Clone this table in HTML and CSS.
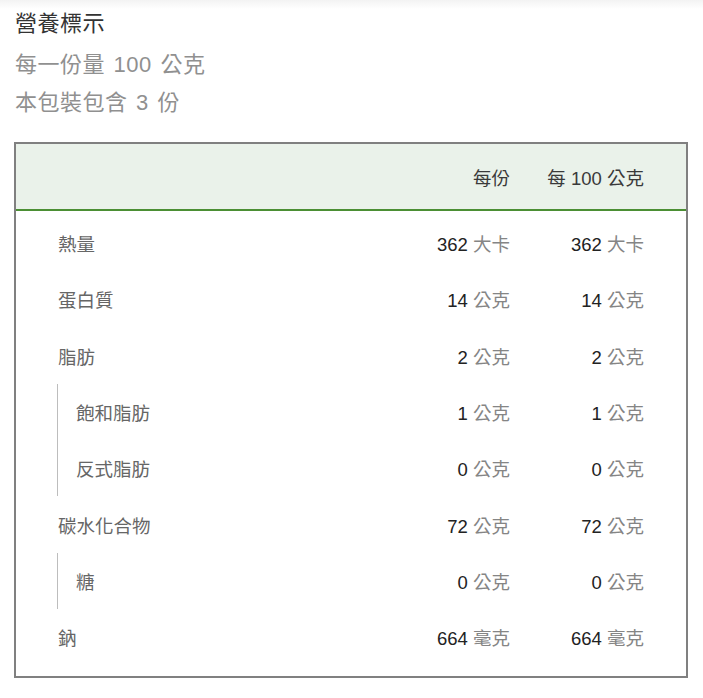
FILE: index.html
```html
<!DOCTYPE html>
<html lang="zh-Hant">
<head>
<meta charset="utf-8">
<title>營養標示</title>
<link rel="stylesheet" href="styles.css">
</head>
<body>
<div class="page">
  <h1 class="title">營養標示</h1>
  <p class="meta">每一份量 100 公克</p>
  <p class="meta">本包裝包含 3 份</p>

  <div class="facts">
    <div class="head">
      <span class="h-label"></span>
      <span class="h-col">每份</span>
      <span class="h-col">每 100 公克</span>
    </div>
    <div class="body">
      <div class="row"><span class="label">熱量</span><span class="val"><b>362</b> 大卡</span><span class="val"><b>362</b> 大卡</span></div>
      <div class="row"><span class="label">蛋白質</span><span class="val"><b>14</b> 公克</span><span class="val"><b>14</b> 公克</span></div>
      <div class="row"><span class="label">脂肪</span><span class="val"><b>2</b> 公克</span><span class="val"><b>2</b> 公克</span></div>
      <div class="sub">
        <div class="row"><span class="label">飽和脂肪</span><span class="val"><b>1</b> 公克</span><span class="val"><b>1</b> 公克</span></div>
        <div class="row"><span class="label">反式脂肪</span><span class="val"><b>0</b> 公克</span><span class="val"><b>0</b> 公克</span></div>
      </div>
      <div class="row"><span class="label">碳水化合物</span><span class="val"><b>72</b> 公克</span><span class="val"><b>72</b> 公克</span></div>
      <div class="sub">
        <div class="row"><span class="label">糖</span><span class="val"><b>0</b> 公克</span><span class="val"><b>0</b> 公克</span></div>
      </div>
      <div class="row"><span class="label">鈉</span><span class="val"><b>664</b> 毫克</span><span class="val"><b>664</b> 毫克</span></div>
    </div>
  </div>
</div>
</body>
</html>
```

FILE: styles.css
```css
html {
  margin: 0;
  padding: 0;
  background: #ffffff;
}
body {
  margin: 0;
  padding: 0;
  background: linear-gradient(to bottom, #f3f3f3 0px, #ffffff 9px) no-repeat;
  background-color: #ffffff;
  font-family: "Liberation Sans", Arial, "Noto Sans CJK TC", sans-serif;
  color: #333;
}
.page {
  padding: 9px 15px 20px 14px;
}
.title {
  margin: 0 0 0 1px;
  font-size: 22px;
  font-weight: normal;
  line-height: 30px;
  color: #333;
  letter-spacing: 0.5px;
}
.meta {
  margin: 0 0 0 1px;
  font-size: 22px;
  line-height: 38px;
  color: #909090;
  letter-spacing: 0.5px;
  word-spacing: 2px;
}
.title + .meta {
  margin-top: 7px;
}
.facts {
  margin-top: 20px;
  width: 670px;
  border: 2px solid #808080;
}
.head {
  display: grid;
  grid-template-columns: 1fr 100px 176px;
  height: 65px;
  align-items: center;
  background: #eaf2ea;
  border-bottom: 2px solid #4b8f34;
  font-size: 18.5px;
  color: #3a3a3a;
}
.h-col {
  text-align: right;
}
.head .h-col:last-child {
  padding-right: 42px;
}
.body {
  padding: 4px 0 11px;
}
.row {
  display: grid;
  grid-template-columns: 1fr 100px 176px;
  height: 56.3px;
  align-items: center;
  font-size: 18.5px;
}
.label {
  padding-left: 42px;
  color: #666;
}
.val {
  text-align: right;
  color: #858585;
  white-space: nowrap;
}
.row .val:last-child {
  padding-right: 42px;
}
.val b {
  font-weight: normal;
  color: #222;
}
.sub {
  margin: 6px 0 4px 41px;
  border-left: 1px solid #bdbdbd;
}
.sub .row:first-child {
  margin-top: -6px;
}
.sub .row:last-child {
  margin-bottom: -4px;
}
.sub .label {
  padding-left: 18px;
}
```
